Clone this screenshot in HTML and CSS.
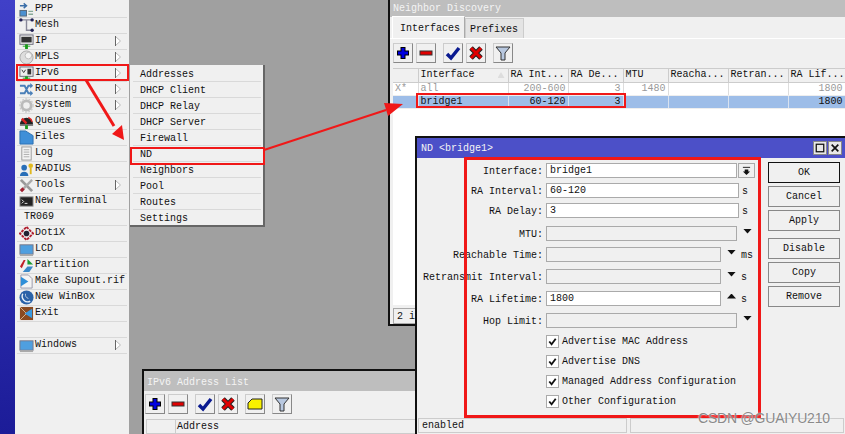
FILE: index.html
```html
<!DOCTYPE html>
<html>
<head>
  <meta charset="utf-8"/>
  <title>WinBox IPv6 ND</title>
  <link rel="stylesheet" href="styles.css">
</head>
<body>
  <div class="screen">
    <div class="strip"></div>

    <!-- Main side menu -->
    <div class="menu">
      <div class="item"><svg class="ico" viewBox="0 0 16 16"><path d="M1 4h6M5 1.500l3 2.500-3 2.500" fill="none" stroke="#3a6ea8" stroke-width="1.500"/><rect x="1" y="9" width="7" height="6" fill="#4a90d0" stroke="#567"/><path d="M10 10h5M10 13h5" stroke="#8a9" stroke-width="1.500"/></svg>PPP</div>
      <div class="item"><svg class="ico" viewBox="0 0 16 16"><path d="M2 2h12M8 2v11h6" fill="none" stroke="#889" stroke-width="1.500"/><circle cx="2" cy="2" r="1.800" fill="#225"/><circle cx="14" cy="2" r="1.800" fill="#225"/><circle cx="14" cy="13" r="1.800" fill="#225"/></svg>Mesh</div>
      <div class="item"><svg class="ico" viewBox="0 0 16 16"><rect x="1" y="1" width="14" height="10" fill="#eee" stroke="#667"/><rect x="2.500" y="3" width="11" height="6" fill="#333"/><path d="M4 13h8" stroke="#2a2"/><rect x="6.500" y="11" width="3" height="5" fill="#1a9a1a"/></svg>IP<svg class="sub" viewBox="0 0 6 10"><path d="M.5 .5L5.500 5 .5 9.500z" fill="#fff" stroke="#bbb"/><path d="M.5 0v10" stroke="#666"/></svg></div>
      <div class="item"><svg class="ico" viewBox="0 0 16 16"><circle cx="8" cy="8" r="7" fill="#ddd" stroke="#aaa"/><circle cx="10" cy="6" r="3.500" fill="#f4f4f4" stroke="#bbb"/></svg>MPLS<svg class="sub" viewBox="0 0 6 10"><path d="M.5 .5L5.500 5 .5 9.500z" fill="#fff" stroke="#bbb"/><path d="M.5 0v10" stroke="#666"/></svg></div>
      <div class="item"><svg class="ico" viewBox="0 0 16 16"><rect x="1" y="1" width="14" height="10" fill="#eee" stroke="#667"/><path d="M3 4l2 3 2-3" fill="none" stroke="#333"/><rect x="9" y="3" width="4" height="6" fill="#333"/><rect x="6.500" y="11" width="3" height="5" fill="#1a9a1a"/><path d="M4 13h8" stroke="#2a2"/></svg>IPv6<svg class="sub" viewBox="0 0 6 10"><path d="M.5 .5L5.500 5 .5 9.500z" fill="#fff" stroke="#bbb"/><path d="M.5 0v10" stroke="#666"/></svg></div>
      <div class="item"><svg class="ico" viewBox="0 0 16 16"><path d="M1 4h5l4 8h4M1 12h5l4-8h4" fill="none" stroke="#4a7fb8" stroke-width="2"/><path d="M12 1l3 3-3 3zM12 9l3 3-3 3z" fill="#4a7fb8"/></svg>Routing<svg class="sub" viewBox="0 0 6 10"><path d="M.5 .5L5.500 5 .5 9.500z" fill="#fff" stroke="#bbb"/><path d="M.5 0v10" stroke="#666"/></svg></div>
      <div class="item"><svg class="ico" viewBox="0 0 16 16"><circle cx="8" cy="8" r="5" fill="none" stroke="#bbb" stroke-width="3"/><circle cx="8" cy="8" r="7" fill="none" stroke="#ccc" stroke-width="1.500" stroke-dasharray="2 1.500"/></svg>System<svg class="sub" viewBox="0 0 6 10"><path d="M.5 .5L5.500 5 .5 9.500z" fill="#fff" stroke="#bbb"/><path d="M.5 0v10" stroke="#666"/></svg></div>
      <div class="item"><svg class="ico" viewBox="0 0 16 16"><path d="M1 11a7 7 0 0 1 14 0z" fill="#222"/><path d="M3 5l5 5" stroke="#d22" stroke-width="2.500"/><path d="M10 3.500a7 7 0 0 1 4 5" fill="none" stroke="#d22" stroke-width="1.500"/><rect x="1" y="11" width="14" height="1.500" fill="#555"/><rect x="6.500" y="12" width="3" height="4" fill="#1a9a1a"/></svg>Queues</div>
      <div class="item"><svg class="ico" viewBox="0 0 16 16"><path d="M1 1h6l8 5v9H1z" fill="#3f8fd8" stroke="#2a6fb0"/></svg>Files</div>
      <div class="item"><svg class="ico" viewBox="0 0 16 16"><rect x="3" y="1" width="10" height="14" fill="#f4f4f4" stroke="#999"/><path d="M5 4h6M5 6.500h6M5 9h6M5 11.500h6" stroke="#aaa"/></svg>Log</div>
      <div class="item"><svg class="ico" viewBox="0 0 16 16"><circle cx="5.500" cy="6" r="3" fill="#2a6fb8"/><path d="M1 15c0-6 9-6 9 0z" fill="#2a6fb8"/><circle cx="12.500" cy="4" r="2.500" fill="#e0b820"/><path d="M12.500 6v7" stroke="#e0b820" stroke-width="2"/></svg>RADIUS</div>
      <div class="item"><svg class="ico" viewBox="0 0 16 16"><path d="M2 2l12 12" stroke="#999" stroke-width="3"/><path d="M14 2L5 11" stroke="#aaa" stroke-width="2.500"/><path d="M5 11l-3 3" stroke="#a02030" stroke-width="3.500"/></svg>Tools<svg class="sub" viewBox="0 0 6 10"><path d="M.5 .5L5.500 5 .5 9.500z" fill="#fff" stroke="#bbb"/><path d="M.5 0v10" stroke="#666"/></svg></div>
      <div class="item"><svg class="ico" viewBox="0 0 16 16"><rect x="1" y="3" width="14" height="10" fill="#222" stroke="#999"/><path d="M3 6l2 2-2 2M6 10h3" fill="none" stroke="#eee"/></svg>New Terminal</div>
      <div class="item plain">TR069</div>
      <div class="item"><svg class="ico" viewBox="0 0 16 16"><path d="M8 1l7 7-7 7-7-7z" fill="none" stroke="#b02030" stroke-width="2" stroke-dasharray="3 1"/><circle cx="8" cy="8" r="3" fill="#223"/></svg>Dot1X</div>
      <div class="item"><svg class="ico" viewBox="0 0 16 16"><rect x="1" y="3" width="14" height="10" fill="#4f9fdf" stroke="#778"/><path d="M1 14h14" stroke="#aaa" stroke-width="2"/></svg>LCD</div>
      <div class="item"><svg class="ico" viewBox="0 0 16 16"><path d="M1 9l4-7h2L3 11z" fill="#c02028"/><path d="M9 1l6 6H9z" fill="#1a9a30"/><path d="M4 15l5-6h6l-4 6z" fill="#3a88c8"/></svg>Partition</div>
      <div class="item"><svg class="ico" viewBox="0 0 16 16"><path d="M2 1h8l4 4v10H2z" fill="#f4f4f4" stroke="#99a"/><path d="M2 3l8 5-8 5z" fill="#2f8fd8"/></svg>Make Supout.rif</div>
      <div class="item"><svg class="ico" viewBox="0 0 16 16"><circle cx="8" cy="8" r="7.500" fill="#2a62a8"/><path d="M4 4a6 6 0 0 0 8 8" fill="none" stroke="#e8f0f8" stroke-width="1.500"/><path d="M7 4a4 4 0 0 0 3 5" fill="none" stroke="#bcd" /></svg>New WinBox</div>
      <div class="item"><svg class="ico" viewBox="0 0 16 16"><rect x="1" y="1" width="14" height="14" fill="#8a4a20"/><path d="M1 1l7 7-7 7M8 8" fill="none" stroke="#d8b890"/><path d="M14 3v10l-8-5z" fill="#3a9ae0"/></svg>Exit</div>
      <div class="item"></div>
      <div class="item"><svg class="ico" viewBox="0 0 16 16"><rect x="1" y="3" width="14" height="10" fill="#4f9fdf" stroke="#778"/><path d="M1 14h14" stroke="#aaa" stroke-width="2"/></svg>Windows<svg class="sub" viewBox="0 0 6 10"><path d="M.5 .5L5.500 5 .5 9.500z" fill="#fff" stroke="#bbb"/><path d="M.5 0v10" stroke="#666"/></svg></div>
    </div>

    <div class="desk"></div>

    <!-- IPv6 submenu -->
    <div class="submenu">
      <div class="subitem">Addresses</div>
      <div class="subitem">DHCP Client</div>
      <div class="subitem">DHCP Relay</div>
      <div class="subitem">DHCP Server</div>
      <div class="subitem">Firewall</div>
      <div class="subitem">ND</div>
      <div class="subitem">Neighbors</div>
      <div class="subitem">Pool</div>
      <div class="subitem">Routes</div>
      <div class="subitem">Settings</div>
    </div>

    <!-- Address list window, behind the dialog -->
    <div class="window addr-win">
      <div class="win-title">IPv6 Address List</div>
      <div class="toolbar">
        <button class="tool"><svg viewBox="0 0 16 16"><path d="M8 2v12M2 8h12" stroke="#000" stroke-width="5"/><path d="M8 3v10M3 8h10" stroke="#0000e0" stroke-width="3"/></svg></button>
        <button class="tool"><svg viewBox="0 0 16 16"><rect x="2" y="6" width="12" height="4" fill="#e00000" stroke="#333"/></svg></button>
        <button class="tool gap"><svg viewBox="0 0 16 16"><path d="M2 9l4 4 8-10" fill="none" stroke="#0a1a90" stroke-width="3.500"/></svg></button>
        <button class="tool"><svg viewBox="0 0 16 16"><path d="M3 3l10 10M13 3L3 13" stroke="#222" stroke-width="5"/><path d="M3 3l10 10M13 3L3 13" stroke="#e00000" stroke-width="3"/></svg></button>
        <button class="tool gap"><svg viewBox="0 0 16 16"><path d="M1 7l4-4h10v10H1z" fill="#f8f000" stroke="#222"/></svg></button>
        <button class="tool gap"><svg viewBox="0 0 16 16"><path d="M1 2h14l-5 6v7H6V8z" fill="#b8c8e0" stroke="#333"/></svg></button>
      </div>
      <div class="addr-head"><span class="addr-first"></span><span>Address</span></div>
    </div>

    <!-- Neighbor Discovery window -->
    <div class="window nd-win">
      <div class="win-title">Neighbor Discovery</div>
      <div class="tabs">
        <div class="tab active">Interfaces</div>
        <div class="tab">Prefixes</div>
      </div>
      <div class="toolbar">
        <button class="tool"><svg viewBox="0 0 16 16"><path d="M8 2v12M2 8h12" stroke="#000" stroke-width="5"/><path d="M8 3v10M3 8h10" stroke="#0000e0" stroke-width="3"/></svg></button>
        <button class="tool"><svg viewBox="0 0 16 16"><rect x="2" y="6" width="12" height="4" fill="#e00000" stroke="#333"/></svg></button>
        <button class="tool gap"><svg viewBox="0 0 16 16"><path d="M2 9l4 4 8-10" fill="none" stroke="#0a1a90" stroke-width="3.500"/></svg></button>
        <button class="tool"><svg viewBox="0 0 16 16"><path d="M3 3l10 10M13 3L3 13" stroke="#222" stroke-width="5"/><path d="M3 3l10 10M13 3L3 13" stroke="#e00000" stroke-width="3"/></svg></button>
        <button class="tool gap"><svg viewBox="0 0 16 16"><path d="M1 2h14l-5 6v7H6V8z" fill="#b8c8e0" stroke="#333"/></svg></button>
      </div>
      <div class="grid-wrap">
        <table class="grid">
          <colgroup>
            <col class="c0"><col class="c1"><col class="c2"><col class="c3"><col class="c4"><col class="c5"><col class="c5"><col class="c6">
          </colgroup>
          <tr>
            <th></th><th>Interface<span class="sort"></span></th><th>RA Int...</th><th>RA De...</th><th>MTU</th><th>Reacha...</th><th>Retran...</th><th>RA Lif...</th>
          </tr>
          <tr class="off">
            <td>X*</td><td>all</td><td class="num">200-600</td><td class="num">3</td><td class="num">1480</td><td></td><td></td><td class="num">1800</td>
          </tr>
          <tr class="sel">
            <td></td><td>bridge1</td><td class="num">60-120</td><td class="num">3</td><td></td><td></td><td></td><td class="num">1800</td>
          </tr>
        </table>
      </div>
      <div class="win-status">2 items</div>
    </div>

    <!-- ND dialog -->
    <div class="window dialog">
      <div class="dlg-title">
        <span>ND &lt;bridge1&gt;</span>
        <span class="dlg-btns">
          <span class="dlg-btn"><svg viewBox="0 0 12 12"><rect x="1.500" y="1.500" width="9" height="9" fill="none" stroke="#111" stroke-width="1.500"/></svg></span>
          <span class="dlg-btn"><svg viewBox="0 0 12 12"><path d="M2 2l8 8M10 2l-8 8" stroke="#111" stroke-width="2"/></svg></span>
        </span>
      </div>
      <div class="dlg-body">
        <div class="form">
          <div class="row"><label>Interface:</label><div class="field on w-a">bridge1</div><span class="pick"><svg viewBox="0 0 10 10"><path d="M1 1h8M1 3h8M3 4h4v2h2L5 10 1 6h2z" fill="#111" stroke="none"/><path d="M1 1.500h8" stroke="#111"/></svg></span></div>
          <div class="row"><label>RA Interval:</label><div class="field on w-b">60-120</div><span class="unit">s</span></div>
          <div class="row gap-l"><label>RA Delay:</label><div class="field on w-b">3</div><span class="unit">s</span></div>
          <div class="row gap-s"><label>MTU:</label><div class="field w-a"></div><span class="tri"></span></div>
          <div class="row gap-m"><label>Reachable Time:</label><div class="field w-c"></div><span class="tri"></span><span class="unit">ms</span></div>
          <div class="row gap-m"><label>Retransmit Interval:</label><div class="field w-c"></div><span class="tri"></span><span class="unit">s</span></div>
          <div class="row gap-m"><label>RA Lifetime:</label><div class="field on w-c">1800</div><span class="tri up"></span><span class="unit">s</span></div>
          <div class="row gap-m"><label>Hop Limit:</label><div class="field w-a"></div><span class="tri"></span></div>
          <div class="check first"><span class="box"><svg viewBox="0 0 12 12"><path d="M2.500 6l2.500 3 4.500-6" fill="none" stroke="#111" stroke-width="2"/></svg></span>Advertise MAC Address</div>
          <div class="check"><span class="box"><svg viewBox="0 0 12 12"><path d="M2.500 6l2.500 3 4.500-6" fill="none" stroke="#111" stroke-width="2"/></svg></span>Advertise DNS</div>
          <div class="check"><span class="box"><svg viewBox="0 0 12 12"><path d="M2.500 6l2.500 3 4.500-6" fill="none" stroke="#111" stroke-width="2"/></svg></span>Managed Address Configuration</div>
          <div class="check"><span class="box"><svg viewBox="0 0 12 12"><path d="M2.500 6l2.500 3 4.500-6" fill="none" stroke="#111" stroke-width="2"/></svg></span>Other Configuration</div>
        </div>
        <div class="actions">
          <button class="btn default">OK</button>
          <button class="btn">Cancel</button>
          <button class="btn">Apply</button>
          <button class="btn sep">Disable</button>
          <button class="btn">Copy</button>
          <button class="btn">Remove</button>
        </div>
      </div>
      <div class="dlg-status"><div class="cell first-cell">enabled</div><div class="cell"></div></div>
    </div>

    <!-- Red annotations drawn over the screenshot -->
    <div class="mark m-ipv6"></div>
    <div class="mark m-nd"></div>
    <div class="mark m-row"></div>
    <div class="mark m-form"></div>
    <svg class="arrows" viewBox="0 0 845 434">
      <path d="M86 80L114 126" stroke="#f01818" stroke-width="3" fill="none"/>
      <path d="M124 140L112 134L122 125z" fill="#f01818"/>
      <path d="M264 150L386 110" stroke="#f01818" stroke-width="2" fill="none"/>
      <path d="M403 104L388 116L384 103z" fill="#f01818"/>
    </svg>

    <div class="watermark">CSDN @GUAIYU210</div>
  </div>
</body>
</html>
```
FILE: styles.css
```css
* {
  box-sizing: border-box;
}
body {
  margin: 0;
  font-family: "Liberation Mono", "DejaVu Sans Mono", monospace;
  font-size: 10px;
  color: #111;
}
svg {
  display: block;
}

.screen {
  position: relative;
  display: flex;
  width: 845px;
  height: 434px;
  overflow: hidden;
}
.strip {
  width: 15px;
  background: linear-gradient(#4040c8, #1c1c98);
}
.desk {
  flex: 1;
  background: #a0a0a0;
}

/* side menu */
.menu {
  width: 114px;
  padding: 2px 2px 0 2px;
  background: #f0f0f0;
}
.item {
  display: flex;
  align-items: center;
  height: 16px;
  padding-bottom: 1px;
  border-bottom: 1px solid #d9d9d9;
  line-height: 12px;
}
.ico {
  width: 15px;
  height: 15px;
  margin: 0 1px 0 2px;
  flex: none;
}
.plain {
  padding-left: 7px;
}
.sub {
  width: 6px;
  height: 10px;
  margin-left: auto;
  margin-right: 6px;
}

.submenu {
  position: absolute;
  left: 130px;
  top: 65px;
  width: 135px;
  height: 162px;
  padding: 1px 2px 0 3px;
  background: #f0f0f0;
  border-right: 2px solid #666;
  border-bottom: 2px solid #666;
}
.subitem {
  height: 16px;
  padding-left: 7px;
  line-height: 17px;
  border-bottom: 1px solid #d9d9d9;
}
.subitem:last-child {
  border-bottom: none;
}

/* windows */
.window {
  position: absolute;
  background: #f0f0f0;
  border: 2px solid #111;
}
.win-title {
  height: 17px;
  padding-left: 3px;
  line-height: 17px;
  background: #bebebe;
  color: #f4f4f4;
}
.nd-win {
  left: 388px;
  top: -2px;
  width: 470px;
  height: 328px;
}
.addr-win {
  left: 142px;
  top: 369px;
  width: 300px;
  height: 80px;
}
.addr-win .win-title {
  height: 20px;
  line-height: 23px;
  padding-left: 3px;
}
.addr-win .toolbar {
  padding: 3px 0 0 1px;
}
.addr-head {
  display: flex;
  height: 15px;
  margin: 5px 0 0 2px;
  border: 1px solid #ccc;
  background: #f0f0f0;
  line-height: 14px;
}
.addr-first {
  width: 29px;
  margin-right: 1px;
  border-right: 1px solid #ccc;
}

.tabs {
  display: flex;
  align-items: flex-end;
  height: 22px;
  padding: 0 0 0 2px;
  border-bottom: 1px solid #fff;
}
.tab {
  height: 20px;
  padding: 0 5px 0 4px;
  line-height: 21px;
  border: 1px solid #ccc;
  border-bottom: none;
  background: #e4e4e4;
}
.tab.active {
  height: 22px;
  padding: 0 4px 0 7px;
  line-height: 24px;
  background: #f0f0f0;
  border-color: #fff #aaa transparent #fff;
}

.toolbar {
  display: flex;
  gap: 3px;
  padding: 4px 0 0 3px;
}
.tool {
  width: 20px;
  height: 20px;
  padding: 1px;
  border: 1px solid #888;
  border-top-color: #ccc;
  border-left-color: #ccc;
  background: #f0f0f0;
}
.tool.gap {
  margin-left: 4px;
}
.tool svg {
  width: 16px;
  height: 16px;
}

.grid-wrap {
  height: 237px;
  margin: 5px 0 0 3px;
  background: #fff;
  border-top: 1px solid #ccc;
}
.grid {
  width: 452px;
  table-layout: fixed;
  border-collapse: collapse;
  line-height: 12px;
}
.c0 { width: 25px; }
.c1 { width: 90px; }
.c2 { width: 60px; }
.c3 { width: 55px; }
.c4 { width: 45px; }
.c5 { width: 60px; }
.c6 { width: 57px; }
.grid th {
  height: 13px;
  padding: 0 2px;
  font-weight: normal;
  text-align: left;
  background: #f0f0f0;
  border-right: 1px solid #ccc;
  border-bottom: 1px solid #ccc;
  white-space: nowrap;
  overflow: hidden;
  position: relative;
}
.grid td {
  height: 13px;
  padding: 0 2px;
  border-right: 1px solid #ddd;
  border-bottom: 1px solid #eee;
  white-space: nowrap;
}
.grid .num {
  text-align: right;
}
.off td {
  color: #999;
}
.sel td {
  background: #9dbde8;
  border-right-color: #d8e2f0;
  color: #111;
}
.sort {
  position: absolute;
  right: 3px;
  top: 3px;
  width: 7px;
  height: 6px;
  background: #ddd;
  clip-path: polygon(50% 0, 100% 100%, 0 100%);
}
.win-status {
  width: 100px;
  height: 16px;
  margin: 3px 0 0 3px;
  padding-left: 3px;
  line-height: 15px;
  border: 1px solid #aaa;
  white-space: nowrap;
}

/* ND dialog */
.dialog {
  left: 416px;
  top: 137px;
  width: 440px;
  height: 310px;
  border-width: 1px 0 0 1px;
  outline: 1px solid #111;
}
.dlg-title {
  display: flex;
  justify-content: space-between;
  align-items: center;
  width: 428px;
  height: 20px;
  padding: 0 3px 0 4px;
  background: #4c50c8;
  color: #f4f4f4;
}
.dlg-btns {
  display: flex;
  gap: 1px;
}
.dlg-btn {
  width: 14px;
  height: 14px;
  padding: 1px;
  background: #e8e8e8;
  border: 1px solid #888;
}
.dlg-btn svg {
  width: 10px;
  height: 10px;
}
.dlg-body {
  display: flex;
  width: 428px;
  height: 260px;
}
.form {
  width: 351px;
  padding-top: 5px;
}
.row {
  display: flex;
  align-items: center;
  height: 15px;
  margin-bottom: 5px;
}
.row.gap-l {
  margin-bottom: 8px;
}
.row.gap-m {
  margin-bottom: 7px;
}
.row.gap-s {
  margin-bottom: 6px;
}
.row label {
  width: 126px;
  padding-top: 1px;
  text-align: right;
  flex: none;
  margin-right: 3px;
}
.field {
  height: 15px;
  padding-left: 3px;
  line-height: 14px;
  border: 1px solid #aaa;
  background: #f0f0f0;
  flex: none;
}
.field.on {
  background: #fff;
}
.w-a { width: 191px; }
.w-b { width: 193px; }
.w-c { width: 175px; }
.pick {
  width: 17px;
  height: 15px;
  margin-left: 1px;
  padding: 2px 3px;
  border: 1px solid #aaa;
}
.pick svg {
  width: 9px;
  height: 9px;
}
.unit {
  margin-left: 3px;
  padding-top: 1px;
}
.tri {
  width: 9px;
  height: 5px;
  margin: -5px 0 0 6px;
  background: #111;
  clip-path: polygon(0 0, 100% 0, 50% 100%);
}
.tri.up {
  clip-path: polygon(50% 0, 100% 100%, 0 100%);
}
.tri + .unit {
  margin-left: 5px;
}
.check {
  display: flex;
  align-items: center;
  height: 13px;
  margin: 0 0 7px 129px;
}
.check.first {
  margin-top: 6px;
}
.box {
  width: 13px;
  height: 13px;
  margin-right: 3px;
  background: #fff;
  border: 1px solid #aaa;
  flex: none;
}
.box svg {
  width: 11px;
  height: 11px;
}
.actions {
  display: flex;
  flex-direction: column;
  gap: 3px;
  padding-top: 4px;
}
.btn {
  width: 72px;
  height: 21px;
  padding: 0;
  border: 1px solid #888;
  background: #f0f0f0;
  font: inherit;
  color: inherit;
}
.btn.default {
  border-color: #111;
}
.btn.sep {
  margin-top: 4px;
}
.dlg-status {
  display: flex;
  width: 426px;
  height: 15px;
  margin-left: 1px;
  gap: 3px;
}
.cell {
  flex: 1;
  padding-left: 3px;
  line-height: 13px;
  border: 1px solid #ccc;
}
.first-cell {
  flex: none;
  width: 209px;
}

/* annotations */
.mark {
  position: absolute;
  border: 2px solid #f01818;
}
.m-ipv6 {
  left: 16px;
  top: 64px;
  width: 113px;
  height: 17px;
}
.m-nd {
  left: 130px;
  top: 147px;
  width: 135px;
  height: 18px;
}
.m-row {
  left: 416px;
  top: 93px;
  width: 210px;
  height: 15px;
}
.m-form {
  left: 464px;
  top: 157px;
  width: 297px;
  height: 261px;
  border-width: 3px;
}
.arrows {
  position: absolute;
  left: 0;
  top: 0;
  width: 845px;
  height: 434px;
}
.watermark {
  position: absolute;
  left: 698px;
  top: 410px;
  font-family: "Liberation Sans", sans-serif;
  font-size: 14px;
  letter-spacing: -0.2px;
  color: #8a8a8a;
  text-shadow: 0 0 2px #fff;
}
```
